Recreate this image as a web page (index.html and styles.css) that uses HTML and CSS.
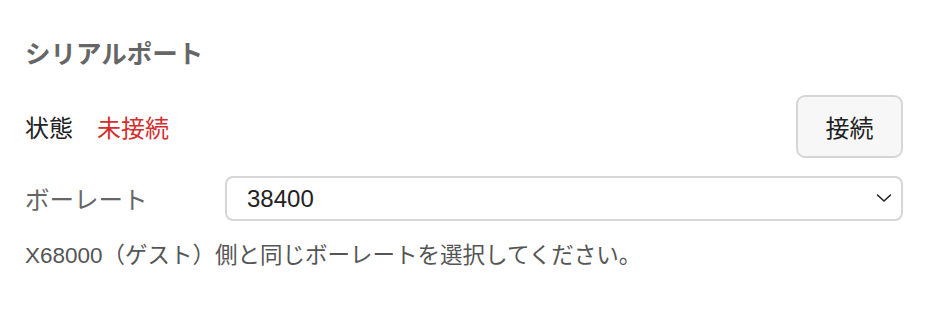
FILE: index.html
```html
<!DOCTYPE html>
<html lang="ja">
<head>
<meta charset="utf-8">
<title>シリアルポート</title>
<link rel="stylesheet" href="styles.css">
</head>
<body>
<section class="panel">
  <h2 class="title">シリアルポート</h2>
  <div class="status-row">
    <span class="status-label">状態</span>
    <span class="status-value">未接続</span>
    <button class="btn" type="button">接続</button>
  </div>
  <div class="field-row">
    <label class="field-label" for="baud">ボーレート</label>
    <div class="select-wrap">
      <select id="baud" class="select">
        <option>9600</option>
        <option>19200</option>
        <option selected>38400</option>
        <option>57600</option>
        <option>115200</option>
      </select>
      <svg class="chevron" width="16" height="10" viewBox="0 0 16 10" aria-hidden="true"><polyline points="1.5,2 8,8 14.5,2" fill="none" stroke="#222" stroke-width="1.6" stroke-linecap="round" stroke-linejoin="round"/></svg>
    </div>
  </div>
  <p class="help">X68000（ゲスト）側と同じボーレートを選択してください。</p>
</section>
</body>
</html>
```

FILE: styles.css
```css
html, body {
  margin: 0;
  padding: 0;
  background: #ffffff;
}
body {
  font-family: "Liberation Sans", "Noto Sans CJK JP", sans-serif;
  color: #222;
}
.panel {
  padding: 37px 25px 0 25px;
  display: flex;
  flex-direction: column;
}
.title {
  margin: 0;
  font-size: 25.5px;
  line-height: 34px;
  font-weight: 700;
  color: #666;
}
.status-row {
  margin-top: 24px;
  display: flex;
  align-items: center;
  height: 63px;
}
.status-label {
  font-size: 24px;
  color: #222;
}
.status-value {
  margin-left: 24px;
  font-size: 24px;
  color: #d32f2f;
}
.btn {
  margin-left: auto;
  height: 63px;
  width: 107px;
  padding: 0;
  font-family: inherit;
  font-size: 24px;
  color: #222;
  background: #f7f7f7;
  border: 2px solid #d6d6d6;
  border-radius: 9px;
}
.field-row {
  margin-top: 18px;
  display: grid;
  grid-template-columns: 200px 1fr;
  align-items: center;
}
.field-label {
  font-size: 24.5px;
  color: #666;
}
.select-wrap {
  position: relative;
  height: 45px;
}
.select {
  appearance: none;
  -webkit-appearance: none;
  width: 100%;
  height: 45px;
  margin: 0;
  padding: 0 40px 0 20px;
  font-family: inherit;
  font-size: 24px;
  color: #222;
  background: #fff;
  border: 2px solid #d6d6d6;
  border-radius: 8px;
  box-sizing: border-box;
}
.chevron {
  position: absolute;
  right: 11px;
  top: 17px;
  pointer-events: none;
}
.help {
  margin: 18px 0 0 0;
  font-size: 22.5px;
  line-height: 34px;
  color: #555;
}
```
